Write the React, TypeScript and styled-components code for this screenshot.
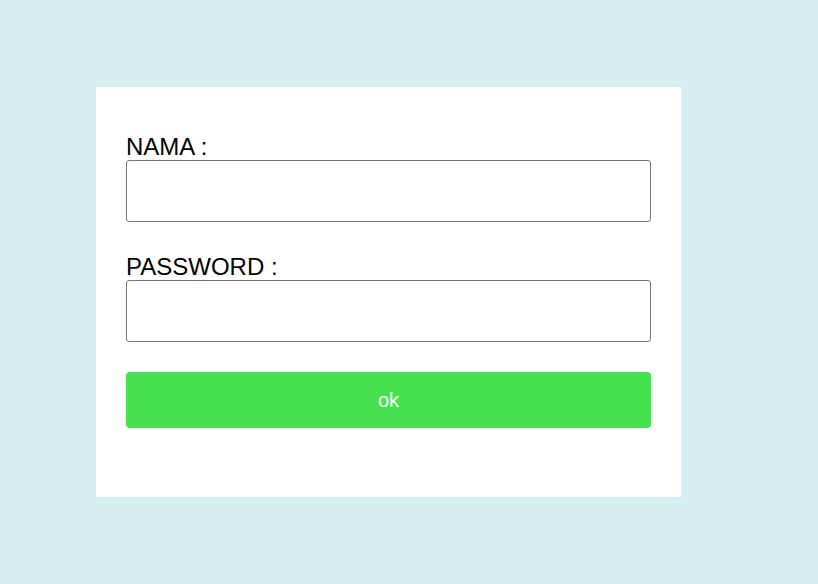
import React from "react";
import styled, { createGlobalStyle } from "styled-components";

const Global = createGlobalStyle`
  html, body { margin: 0; padding: 0; }
  body {
    background: #d5eef2;
    font-family: "Liberation Sans", Arial, sans-serif;
    width: 818px;
    height: 584px;
    overflow: hidden;
  }
`;

const Page = styled.div`
  padding: 87px 0 0 96px;
`;

const Card = styled.form`
  box-sizing: border-box;
  width: 585px;
  height: 410px;
  background: #ffffff;
  padding: 46px 30px 0 30px;
  display: flex;
  flex-direction: column;
`;

const Field = styled.div<{ $gap?: number }>`
  display: flex;
  flex-direction: column;
  margin-bottom: ${(p) => p.$gap ?? 0}px;
`;

const Label = styled.label`
  font-size: 24px;
  line-height: 27px;
  color: #000;
`;

const Input = styled.input`
  box-sizing: border-box;
  width: 525px;
  height: 62px;
  border: 1px solid #767676;
  border-radius: 3px;
  background: #fff;
  padding: 0 8px;
  font-size: 18px;
  font-family: inherit;
  outline: none;
`;

const Button = styled.button`
  box-sizing: border-box;
  width: 525px;
  height: 56px;
  border: none;
  border-radius: 4px;
  background: #47e04e;
  color: #fff;
  font-family: "Liberation Sans", Arial, sans-serif;
  font-size: 20px;
  cursor: pointer;
`;

export default function App() {
  return (
    <>
      <Global />
      <Page>
        <Card onSubmit={(e) => e.preventDefault()}>
          <Field $gap={31}>
            <Label>NAMA :</Label>
            <Input type="text" />
          </Field>
          <Field $gap={30}>
            <Label>PASSWORD :</Label>
            <Input type="password" />
          </Field>
          <Button type="submit">ok</Button>
        </Card>
      </Page>
    </>
  );
}
